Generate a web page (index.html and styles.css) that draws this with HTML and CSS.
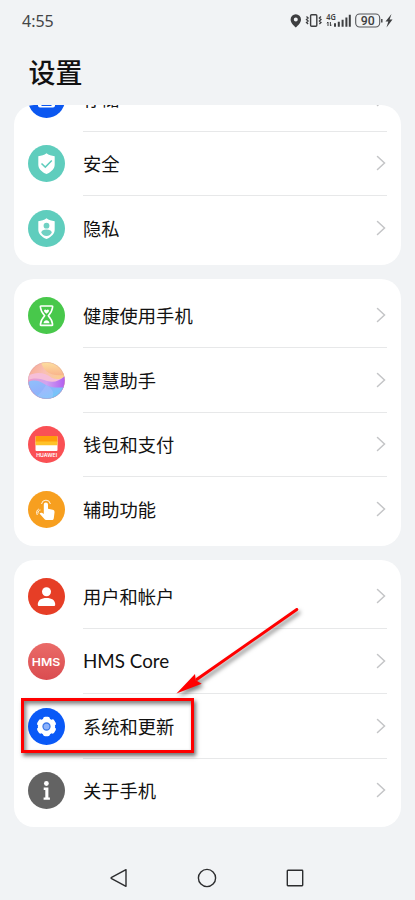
FILE: index.html
```html
<!DOCTYPE html>
<html lang="zh-CN">
<head>
<meta charset="utf-8">
<title>设置</title>
<link rel="stylesheet" href="styles.css">
</head>
<body>
<div class="phone">
  <header class="status">
    <span class="time">4:55</span>
    <svg class="status-icons" width="104" height="18" viewBox="0 0 104 18">
      <path fill="#3d3e40" fill-rule="evenodd" d="M5.8 2.2a5.2 5.2 0 0 0-5.2 5.2c0 3.2 3 6 5.2 8 2.200-2 5.200-4.800 5.200-8A5.200 5.200 0 0 0 5.800 2.200Zm0 3.200a2 2 0 1 1 0 4 2 2 0 0 1 0-4Z"/>
      <rect x="20.600" y="2.700" width="6.200" height="11.600" rx="1" fill="none" stroke="#3d3e40" stroke-width="1.400"/>
      <path d="M16.500 4.500l1.600 1.500-1.600 1.500 1.600 1.500-1.600 1.500 1.600 1.500M31 4.500L29.400 6 31 7.500 29.400 9 31 10.500 29.400 12" fill="none" stroke="#3d3e40" stroke-width="1.300"/>
      <text class="network" x="36.300" y="8" textLength="9.500" lengthAdjust="spacingAndGlyphs">4G</text>
      <path d="M38 10v4M36.900 11.200L38 10M40.400 10v4M41.500 12.800L40.400 14" fill="none" stroke="#3d3e40" stroke-width="1"/>
      <path d="M45 10.500V14M48.800 9V14M52.600 7V14M56.400 4.800V14M59.800 2V14" transform="translate(0 .8)" fill="none" stroke="#3d3e40" stroke-width="2"/>
      <rect x="65.700" y="2" width="24" height="13" rx="4" fill="none" stroke="#55565a" stroke-width="1.100"/>
      <path d="M91.800 7v3.500" stroke="#3d3e40" stroke-width="1.400"/>
      <text class="battery" x="70.700" y="12.800" textLength="14" lengthAdjust="spacingAndGlyphs">90</text>
      <path d="M101.500 2L95.500 9.500h2.800L96.500 15.500 102.500 7.600H99.600Z" fill="#3d3e40"/>
    </svg>
  </header>
  <h1 class="title">设置</h1>

  <main class="list">
    <section class="card card-scrolled">
      <div class="row">
        <svg class="icon" viewBox="0 0 37 37"><circle cx="18.500" cy="18.500" r="18.500" fill="#0b57f0"/><rect x="10" y="10" width="17" height="16.500" rx="2" fill="#fff"/><path d="M12 23l2 2h9l2-2" fill="#0b57f0"/></svg>
        <div class="cell"><span class="label">存储</span><svg class="chevron" viewBox="0 0 10 16"><path d="M1.500 1.500L8.500 8 1.500 14.500"/></svg></div>
      </div>
      <div class="row">
        <svg class="icon" viewBox="0 0 37 37"><circle cx="18.500" cy="18.500" r="18.500" fill="#5fcdbd"/><path d="M18.500 8.300c2.300 1.700 5 2.600 8.200 2.900v8.200c0 4.100-3 7.200-8.200 9.700-5.200-2.500-8.200-5.600-8.200-9.700v-8.200c3.200-.3 5.900-1.200 8.200-2.900Z" fill="#fff"/><path d="M13.500 18.500l3.800 3.600 6.500-6.700" fill="none" stroke="#5fcdbd" stroke-width="1.500"/></svg>
        <div class="cell"><span class="label">安全</span><svg class="chevron" viewBox="0 0 10 16"><path d="M1.500 1.500L8.500 8 1.500 14.500"/></svg></div>
      </div>
      <div class="row">
        <svg class="icon" viewBox="0 0 37 37"><circle cx="18.500" cy="18.500" r="18.500" fill="#5fcdbd"/><path d="M18.500 8.300c2.300 1.700 5 2.600 8.200 2.900v8.200c0 4.100-3 7.200-8.200 9.700-5.200-2.500-8.200-5.600-8.200-9.700v-8.200c3.200-.3 5.900-1.200 8.200-2.900Z" fill="#fff"/><circle cx="18.500" cy="15.700" r="2.900" fill="#70d1c3"/><path d="M13.200 22.500c.5-2.200 2.500-3 5.300-3s4.800.8 5.300 3c-.8 2-2.800 3.300-5.300 3.600-2.500-.3-4.500-1.600-5.300-3.600Z" fill="#70d1c3"/></svg>
        <div class="cell"><span class="label">隐私</span><svg class="chevron" viewBox="0 0 10 16"><path d="M1.500 1.500L8.500 8 1.500 14.500"/></svg></div>
      </div>
    </section>

    <section class="card">
      <div class="row">
        <svg class="icon" viewBox="0 0 37 37"><circle cx="18.500" cy="18.500" r="18.500" fill="#48c84b"/><path d="M13 9h11q.8 0 .6 1c-.3 4-1.900 6.200-4.300 8.700 2.400 2.500 4 4.700 4.300 8.700q.2 1-.6 1H13q-.8 0-.6-1c.3-4 1.900-6.200 4.300-8.700-2.400-2.500-4-4.700-4.300-8.700q-.2-1 .6-1Z" fill="none" stroke="#fff" stroke-width="1.600" stroke-linejoin="round"/><path d="M18.500 16.800c-1.800-1.200-2.800-2.400-2.400-3.500.5-1 1.700-.9 2.400 0 .7-.9 1.900-1 2.400 0 .4 1.100-.6 2.300-2.400 3.500ZM15.500 26.200c.2-2 1.500-3 3-3s2.800 1 3 3Z" fill="#fff"/></svg>
        <div class="cell"><span class="label">健康使用手机</span><svg class="chevron" viewBox="0 0 10 16"><path d="M1.500 1.500L8.500 8 1.500 14.500"/></svg></div>
      </div>
      <div class="row">
        <svg class="icon" viewBox="0 0 37 37">
          <defs>
            <linearGradient id="sky" x1="0" y1="0" x2="1" y2=".5"><stop offset="0" stop-color="#f7a88c"/><stop offset=".45" stop-color="#f9bfb5"/><stop offset="1" stop-color="#fbd385"/></linearGradient>
            <linearGradient id="hill" x1="0" y1="0" x2="1" y2="0"><stop offset="0" stop-color="#f09bc5"/><stop offset=".5" stop-color="#d0a3f0"/><stop offset="1" stop-color="#b25df0"/></linearGradient>
            <linearGradient id="sea" x1="0" y1="0" x2=".7" y2="1"><stop offset="0" stop-color="#8fc1fb"/><stop offset=".5" stop-color="#92b2fb"/><stop offset="1" stop-color="#67cdf8"/></linearGradient>
            <linearGradient id="sun" x1="0" y1="0" x2="0" y2="1"><stop offset="0" stop-color="#fde0a0"/><stop offset="1" stop-color="#f9b48c"/></linearGradient>
            <clipPath id="disc"><circle cx="18.500" cy="18.500" r="18.300"/></clipPath>
          </defs>
          <g clip-path="url(#disc)"><path d="M0 0h37v37H0Z" fill="url(#sky)"/><path d="M13 0c2 8 8 15 24 13V0Z" fill="url(#sun)"/><path d="M0 14c9-5 17-3 24 2 5 2 9 1 13-1v22H0Z" fill="#f6bfd8"/><path d="M0 18c8-3 13-1 19 1 7 2 12 0 18-5v23H0Z" fill="url(#hill)"/><path d="M0 20c7-3 12-1 18 3 6 3 12 3 19 2v12H0Z" fill="url(#sea)"/><path d="M18 23c-3 5-6 9-10 12l15 2c4-4 3-10-5-14Z" fill="#b5c3ff" opacity=".4"/></g>
          <circle cx="18.500" cy="18.500" r="18.100" fill="none" stroke="#c58ba0" stroke-opacity=".4" stroke-width=".7"/>
        </svg>
        <div class="cell"><span class="label">智慧助手</span><svg class="chevron" viewBox="0 0 10 16"><path d="M1.500 1.500L8.500 8 1.500 14.500"/></svg></div>
      </div>
      <div class="row">
        <svg class="icon" viewBox="0 0 37 37"><circle cx="18.500" cy="18.500" r="18.500" fill="#fa5054"/><rect x="7.500" y="10" width="22" height="15" rx="1" fill="#fff"/><path d="M7.500 15h22v4.200h-22Z" fill="#ffc229"/><path d="M8.500 10h20a1 1 0 0 1 1 1v4.400h-22V11a1 1 0 0 1 1-1Z" fill="#ff9d0a"/><text class="wallet-brand" x="8.200" y="31" textLength="21" lengthAdjust="spacingAndGlyphs">HUAWEI</text></svg>
        <div class="cell"><span class="label">钱包和支付</span><svg class="chevron" viewBox="0 0 10 16"><path d="M1.500 1.500L8.500 8 1.500 14.500"/></svg></div>
      </div>
      <div class="row">
        <svg class="icon" viewBox="0 0 37 37"><circle cx="18.500" cy="18.500" r="18.500" fill="#f79f1f"/><path d="M15.800 13.500a2.100 2.100 0 0 1 4.200 0v4.300l4.700 1c1.500.4 2 1.300 1.800 2.700l-.7 5.700c-.2 1.200-.9 1.900-2 1.900h-5.200c-1 0-1.600-.4-2.200-1.100l-4.900-5.400c.7-1.100 1.800-1.200 2.800-.6l1.500.9Z" fill="#fff"/><path d="M13.500 13a4.500 4.500 0 0 1 8.900 0M12.500 19c-1.600.1-2.800 1.500-2.400 3.500M10.800 18c-2.300 1-2.700 4-1.500 6" fill="none" stroke="#fff" stroke-width=".9"/></svg>
        <div class="cell"><span class="label">辅助功能</span><svg class="chevron" viewBox="0 0 10 16"><path d="M1.500 1.500L8.500 8 1.500 14.500"/></svg></div>
      </div>
    </section>

    <section class="card">
      <div class="row">
        <svg class="icon" viewBox="0 0 37 37"><circle cx="18.500" cy="18.500" r="18.500" fill="#e63e26"/><circle cx="18.500" cy="13.800" r="4.500" fill="#fff"/><path d="M9.800 26.500c0-4.500 3.500-6.600 8.700-6.600s8.700 2.100 8.700 6.600c0 1-.5 1.500-1.500 1.500H11.300c-1 0-1.500-.5-1.500-1.500Z" fill="#fff"/></svg>
        <div class="cell"><span class="label">用户和帐户</span><svg class="chevron" viewBox="0 0 10 16"><path d="M1.500 1.500L8.500 8 1.500 14.500"/></svg></div>
      </div>
      <div class="row">
        <svg class="icon" viewBox="0 0 37 37"><defs><linearGradient id="hms" x1="0" y1="0" x2="0" y2="1"><stop offset="0" stop-color="#ea6b68"/><stop offset="1" stop-color="#da4c50"/></linearGradient></defs><circle cx="18.500" cy="18.500" r="18.500" fill="url(#hms)"/><text class="hms-brand" x="3.800" y="22.700" textLength="28.500" lengthAdjust="spacingAndGlyphs">HMS</text></svg>
        <div class="cell"><span class="label latin">HMS Core</span><svg class="chevron" viewBox="0 0 10 16"><path d="M1.500 1.500L8.500 8 1.500 14.500"/></svg></div>
      </div>
      <div class="row">
        <svg class="icon" viewBox="0 0 37 37"><circle cx="18.500" cy="18.500" r="18.500" fill="#0a59f7"/><circle cx="18.500" cy="18.500" r="8.600" fill="#fff"/><g fill="#fff"><rect x="15.100" y="8.700" width="6.800" height="19.600" rx="2"/><rect x="15.100" y="8.700" width="6.800" height="19.600" rx="2" transform="rotate(60 18.500 18.500)"/><rect x="15.100" y="8.700" width="6.800" height="19.600" rx="2" transform="rotate(120 18.500 18.500)"/></g><circle cx="18.500" cy="18.500" r="3.500" fill="#8db2fb" stroke="#3d79e8" stroke-width="1.300"/></svg>
        <div class="cell"><span class="label">系统和更新</span><svg class="chevron" viewBox="0 0 10 16"><path d="M1.500 1.500L8.500 8 1.500 14.500"/></svg></div>
      </div>
      <div class="row">
        <svg class="icon" viewBox="0 0 37 37"><circle cx="18.500" cy="18.500" r="18.500" fill="#636363"/><circle cx="18.400" cy="11.500" r="2.400" fill="#fff"/><path d="M15.700 15.600h4.700v9.800h1.500v2.400h-6.300v-2.400h1.700V18h-1.600Z" fill="#fff"/></svg>
        <div class="cell"><span class="label">关于手机</span><svg class="chevron" viewBox="0 0 10 16"><path d="M1.500 1.500L8.500 8 1.500 14.500"/></svg></div>
      </div>
    </section>
  </main>

  <nav class="navbar">
    <svg viewBox="0 0 20 20"><path d="M17 1.700v16.600L2.600 10.600q-1-.6 0-1.200Z"/></svg>
    <svg viewBox="0 0 20 20"><circle cx="10" cy="10" r="8.600"/></svg>
    <svg viewBox="0 0 20 20"><rect x="2.300" y="2.300" width="15.400" height="15.400" rx=".6"/></svg>
  </nav>

  <div class="highlight"></div>
  <svg class="arrow" width="140" height="110" viewBox="0 0 140 110"><path d="M126.800 9.500L27 79.300" stroke="#f00" stroke-width="3" stroke-linecap="round"/><path d="M6.500 93.500L25 74l.8 6.300 5.900 3.400Z" fill="#f00"/></svg>
</div>
</body>
</html>
```
FILE: styles.css
```css
* { box-sizing: border-box; }
body { margin: 0; background: #f1f3f5; }
.phone {
  position: relative;
  width: 415px;
  height: 900px;
  overflow: hidden;
  display: flex;
  flex-direction: column;
  color: #111;
  font-family: "Noto Sans CJK SC", sans-serif;
}
.status {
  height: 42px;
  padding: 0 21px 0 22px;
  display: flex;
  align-items: center;
  justify-content: space-between;
}
.time { font: 16px/20px "Noto Sans", sans-serif; color: #444547; }
.status-icons { display: block; }
.network { font: 600 8px "Noto Sans", sans-serif; fill: #3d3e40; }
.battery { font: 500 12px Roboto, sans-serif; fill: #3d3e40; }
.title {
  margin: 0;
  height: 63px;
  padding-left: 28.500px;
  font-size: 27px;
  font-weight: 500;
  line-height: 59px;
}
.list {
  padding: 0 14px;
  display: flex;
  flex-direction: column;
  gap: 14px;
}
.card {
  height: 267.200px;
  padding: 4.800px 14px 3.800px;
  border-radius: 20px;
  background: #fff;
  overflow: hidden;
}
.card-scrolled {
  height: 159.600px;
  padding: 0 14px 3.800px;
  display: flex;
  flex-direction: column;
  justify-content: flex-end;
}
.card-scrolled .row:first-child .label { margin-bottom: 1px; }
.row {
  height: 64.650px;
  flex: none;
  display: flex;
  align-items: center;
  gap: 18.500px;
}
.icon { width: 37px; height: 37px; flex: none; margin-left: -.5px; }
.cell {
  flex: 1;
  height: 100%;
  display: flex;
  align-items: center;
  justify-content: space-between;
  border-bottom: 1px solid #e7e8e9;
}
.row:last-child .cell { border-bottom-color: transparent; }
.label { font-size: 18.300px; line-height: 28px; }
.latin { font-family: Lato, sans-serif; font-size: 18.800px; letter-spacing: 0; }
.chevron { width: 10px; height: 16px; margin-right: 1.500px; }
.chevron path { fill: none; stroke: #c4c5c7; stroke-width: 1.500; stroke-linecap: round; }
.wallet-brand { font: 600 4.600px Inter, sans-serif; fill: #fff; }
.hms-brand { font: 600 11px Inter, sans-serif; fill: #fff; }
.navbar {
  margin-top: 40.700px;
  padding-left: 109.300px;
  display: flex;
  gap: 68px;
}
.navbar svg { width: 20px; height: 20px; fill: none; stroke: #2c2d2f; stroke-width: 1.400; stroke-linejoin: round; }
.highlight {
  position: absolute;
  left: 21px;
  top: 698px;
  width: 173px;
  height: 55px;
  border: 3px solid #f00;
  box-shadow: 2px 3px 4px rgba(0,0,0,.55), inset 2px 3px 4px rgba(0,0,0,.5);
}
.arrow {
  position: absolute;
  left: 170px;
  top: 600px;
  filter: drop-shadow(2px 3px 2px rgba(0,0,0,.5));
}
```
